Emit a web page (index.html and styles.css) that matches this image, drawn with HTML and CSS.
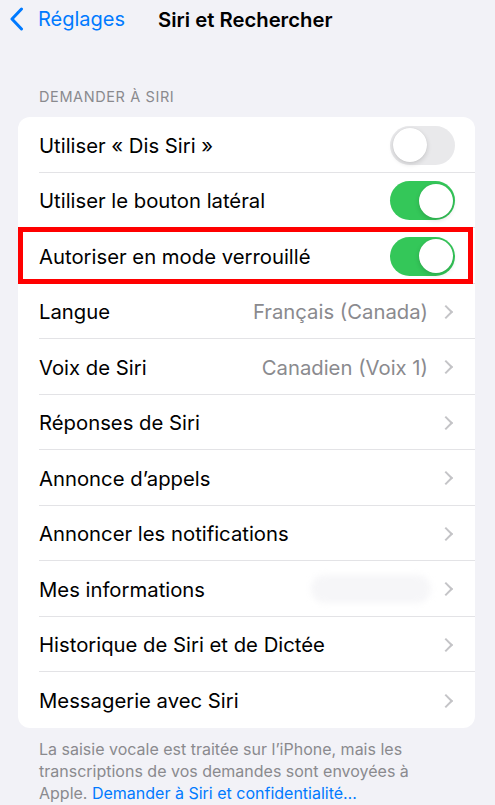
FILE: index.html
```html
<!DOCTYPE html>
<html lang="fr">
<head>
  <meta charset="UTF-8">
  <meta name="viewport" content="width=device-width, initial-scale=1.0">
  <title>Siri et Rechercher</title>
  <link rel="stylesheet" href="styles.css">
</head>
<body>
  <div class="nav">
    <a class="back" href="#">
      <svg class="back-icon" width="14" height="24" viewBox="0 0 14 24">
        <path d="M11.5 2 L2 12 L11.5 22" fill="none" stroke="#007aff" stroke-width="3" stroke-linecap="round" stroke-linejoin="round"/>
      </svg>
      <span>Réglages</span>
    </a>
    <div class="title">Siri et Rechercher</div>
  </div>

  <div class="section-title">DEMANDER À SIRI</div>

  <div class="card">
    <div class="row">
      <div class="row-body">
        <span class="label">Utiliser « Dis Siri »</span>
        <span class="switch"></span>
      </div>
    </div>
    <div class="row">
      <div class="row-body">
        <span class="label">Utiliser le bouton latéral</span>
        <span class="switch on"></span>
      </div>
    </div>
    <div class="row marked">
      <div class="row-body">
        <span class="label">Autoriser en mode verrouillé</span>
        <span class="switch on"></span>
      </div>
    </div>
    <div class="row">
      <div class="row-body">
        <span class="label">Langue</span>
        <span class="value">Français (Canada)</span>
        <span class="chev"></span>
      </div>
    </div>
    <div class="row">
      <div class="row-body">
        <span class="label">Voix de Siri</span>
        <span class="value">Canadien (Voix 1)</span>
        <span class="chev"></span>
      </div>
    </div>
    <div class="row">
      <div class="row-body">
        <span class="label">Réponses de Siri</span>
        <span class="chev"></span>
      </div>
    </div>
    <div class="row">
      <div class="row-body">
        <span class="label">Annonce d’appels</span>
        <span class="chev"></span>
      </div>
    </div>
    <div class="row">
      <div class="row-body">
        <span class="label">Annoncer les notifications</span>
        <span class="chev"></span>
      </div>
    </div>
    <div class="row">
      <div class="row-body">
        <span class="label">Mes informations</span>
        <span class="hidden-name"></span>
        <span class="chev"></span>
      </div>
    </div>
    <div class="row">
      <div class="row-body">
        <span class="label">Historique de Siri et de Dictée</span>
        <span class="chev"></span>
      </div>
    </div>
    <div class="row">
      <div class="row-body">
        <span class="label">Messagerie avec Siri</span>
        <span class="chev"></span>
      </div>
    </div>
  </div>

  <div class="footnote">
    <p>La saisie vocale est traitée sur l’iPhone, mais les transcriptions de vos demandes sont envoyées à</p>
    <p>Apple. <a href="#">Demander à Siri et confidentialité…</a></p>
  </div>
</body>
</html>
```

FILE: styles.css
```css
*{margin: 0;padding: 0;box-sizing: border-box;}
body {
  background: #f2f2f7;
  font-family: Inter, "Noto Sans", sans-serif;
  color: #000;
  width: 495px;
  overflow: hidden;
}
a { text-decoration: none; color: #007aff; }

.nav {
  display: flex;
  align-items: center;
  height: 38px;
  padding-left: 10px;
}
.back {
  display: flex;
  align-items: center;
  gap: 14px;
  font-size: 20px;
  width: 148px;
}
.title {
  font-size: 20.3px;
  font-weight: 600;
}

.section-title {
  margin: 50px 0 0 39px;
  font-size: 14.5px;
  color: #8a8a8e;
  letter-spacing: 0.6px;
  height: 29px;
}

.card {
  margin: 0 20px 0 18px;
  background: #fff;
  border-radius: 12px;
  overflow: hidden;
}
.row {
  position: relative;
  padding-left: 21px;
}
.row-body {
  display: flex;
  align-items: center;
  height: 55.5px;
  padding-right: 20px;
  padding-top: 2px;
  border-bottom: 1px solid #e3e3e6;
}
.row:last-child .row-body { border-bottom: none; }
.label {
  flex: 1;
  font-size: 20.3px;
}
.value {
  font-size: 20.3px;
  color: #8a8a8e;
  margin-right: 13px;
}
.chev {
  width: 10px;
  height: 10px;
  border-top: 2.5px solid #c4c4c7;
  border-right: 2.5px solid #c4c4c7;
  transform: rotate(45deg);
  margin-right: 4px;
}

.switch {
  position: relative;
  width: 65px;
  height: 39px;
  border-radius: 20px;
  background: #e9e9eb;
}
.switch::after {
  content: "";
  position: absolute;
  top: 2.5px;
  left: 2.5px;
  width: 34px;
  height: 34px;
  border-radius: 50%;
  background: #fff;
  box-shadow: 0 2px 5px rgba(0,0,0,0.15), 0 0 1px rgba(0,0,0,0.1);
}
.switch.on { background: #34c759; }
.switch.on::after { left: 28.5px; }

.marked::before {
  content: "";
  position: absolute;
  top: -1px;
  left: 0;
  right: 2px;
  bottom: 0;
  border: 5.5px solid #ff0000;
  z-index: 2;
}

.hidden-name {
  width: 120px;
  height: 28px;
  border-radius: 14px;
  background: #f6f6f8;
  filter: blur(3px);
  margin-right: 10px;
}

.footnote {
  width: 385px;
  margin: 10px 0 0 39px;
  font-size: 16px;
  line-height: 22px;
  color: #8a8a8e;
}
```
